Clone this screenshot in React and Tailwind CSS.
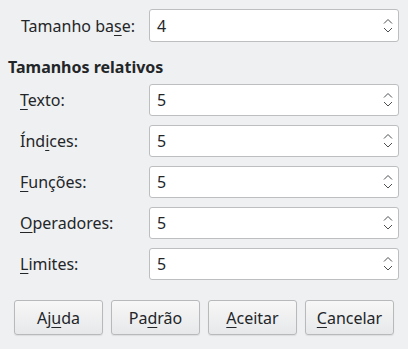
import React from "react";

function Spin({ value }) {
    return (
        <div className="flex items-center justify-between w-[250px] h-full bg-white border border-[#bcbebf] rounded-[3px] pl-[7px] pr-[5px]">
            <span>{value}</span>
            <svg width="10" height="18" viewBox="0 0 10 18" fill="none" stroke="#4d4f51" strokeWidth="1">
                <path d="M1 6.5 L5 2.5 L9 6.5" />
                <path d="M1 11 L5 15 L9 11" />
            </svg>
        </div>
    );
}

function Row({ label, value }) {
    return (
        <div className="flex items-center h-[32px]">
            <div className="w-[149px] pl-[20px] shrink-0">{label}</div>
            <Spin value={value} />
        </div>
    );
}

function Btn({ children }) {
    return (
        <button className="w-[89px] h-[35px] rounded-[3px] border border-[#b7b9ba] bg-gradient-to-b from-[#f7f7f8] to-[#e7e8e9] shadow-[0_1px_1px_rgba(0,0,0,0.08)] text-[#232629]">
            {children}
        </button>
    );
}

export default function App() {
    return (
        <div
            className="w-[408px] h-[349px] bg-[#eff0f1] text-[#232629] text-[16px] leading-[20px] overflow-hidden [&_u]:underline-offset-[3px]"
            style={{ fontFamily: '"Noto Sans", sans-serif' }}
        >
            <div className="pt-[9px]">
                <div className="flex items-center h-[33px]">
                    <div className="w-[149px] pl-[21px] shrink-0">
                        Tamanho ba<u>s</u>e:
                    </div>
                    <Spin value="4" />
                </div>
            </div>
            <div className="mt-[14px] h-[22px] pl-[8px] font-bold flex items-center">Tamanhos relativos</div>
            <div className="mt-[6px] flex flex-col gap-[9px]">
                <Row label={<><u>T</u>exto:</>} value="5" />
                <Row label={<>Índ<u>i</u>ces:</>} value="5" />
                <Row label={<><u>F</u>unções:</>} value="5" />
                <Row label={<><u>O</u>peradores:</>} value="5" />
                <Row label={<><u>L</u>imites:</>} value="5" />
            </div>
            <div className="mt-[20px] pl-[14px] flex gap-[8px]">
                <Btn>Aj<u>u</u>da</Btn>
                <Btn>Pa<u>d</u>rão</Btn>
                <Btn><u>A</u>ceitar</Btn>
                <Btn><u>C</u>ancelar</Btn>
            </div>
        </div>
    );
}
